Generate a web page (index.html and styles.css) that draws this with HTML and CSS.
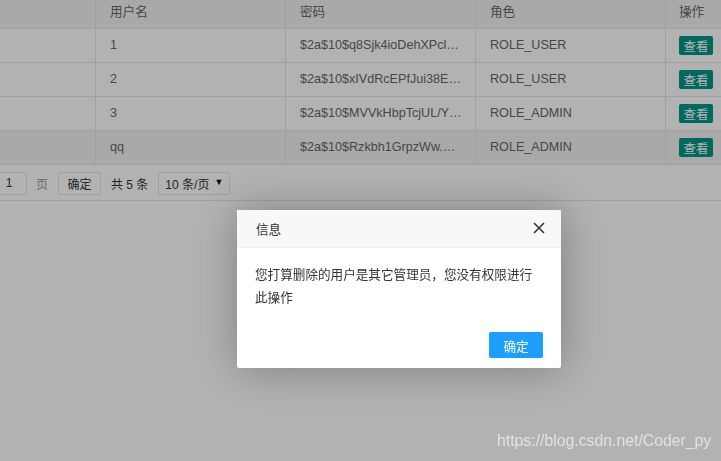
FILE: index.html
```html
<!DOCTYPE html>
<html lang="zh-CN">
<head>
<meta charset="utf-8">
<title>用户管理</title>
<link rel="stylesheet" href="styles.css">
</head>
<body>
<div class="page">
  <div class="table">
    <div class="row head">
      <div class="cell"></div>
      <div class="cell">用户名</div>
      <div class="cell">密码</div>
      <div class="cell">角色</div>
      <div class="cell">操作</div>
    </div>
    <div class="row">
      <div class="cell"></div>
      <div class="cell">1</div>
      <div class="cell">$2a$10$q8Sjk4ioDehXPcl…</div>
      <div class="cell">ROLE_USER</div>
      <div class="cell"><span class="btn-xs">查看</span></div>
    </div>
    <div class="row">
      <div class="cell"></div>
      <div class="cell">2</div>
      <div class="cell">$2a$10$xIVdRcEPfJui38E…</div>
      <div class="cell">ROLE_USER</div>
      <div class="cell"><span class="btn-xs">查看</span></div>
    </div>
    <div class="row">
      <div class="cell"></div>
      <div class="cell">3</div>
      <div class="cell">$2a$10$MVVkHbpTcjUL/Y…</div>
      <div class="cell">ROLE_ADMIN</div>
      <div class="cell"><span class="btn-xs">查看</span></div>
    </div>
    <div class="row hover">
      <div class="cell"></div>
      <div class="cell">qq</div>
      <div class="cell">$2a$10$Rzkbh1GrpzWw.…</div>
      <div class="cell">ROLE_ADMIN</div>
      <div class="cell"><span class="btn-xs">查看</span></div>
    </div>
  </div>
  <div class="pager">
    <span class="skip-input">1</span>
    <span class="muted">页</span>
    <span class="pbtn">确定</span>
    <span class="count">共 5 条</span>
    <span class="limit">10 条/页<span class="arrow">▼</span></span>
  </div>
</div>

<div class="shade"></div>

<div class="dialog">
  <div class="dlg-title">
    <span>信息</span>
    <svg class="close" width="12" height="12" viewBox="0 0 12 12"><path d="M1 1 L11 11 M11 1 L1 11" stroke="#333" stroke-width="1.6" fill="none"/></svg>
  </div>
  <div class="dlg-content">您打算删除的用户是其它管理员，您没有权限进行此操作</div>
  <div class="dlg-btns"><span class="dlg-btn">确定</span></div>
</div>

<div class="watermark">https://blog.csdn.net/Coder_py</div>
</body>
</html>
```

FILE: styles.css
```css
html, body {
  margin: 0;
  padding: 0;
  height: 100%;
  overflow: hidden;
}
body {
  font-family: "Liberation Sans", "Noto Sans CJK SC", sans-serif;
  color: #666;
  background: #fff;
}
.page {
  height: 461px;
  background: #fff;
}
.table {
  display: flex;
  flex-direction: column;
}
.row {
  display: grid;
  grid-template-columns: 96px 190px 190px 190px 1fr;
  height: 34px;
  border-bottom: 1px solid #e6e6e6;
  box-sizing: border-box;
  font-size: 12.6px;
}
.row.head {
  height: 29px;
  background: #f2f2f2;
  padding-bottom: 7px;
}
.row.hover {
  background: #f2f2f2;
}
.cell {
  border-right: 1px solid #e6e6e6;
  padding: 0 14px;
  display: flex;
  align-items: center;
  min-width: 0;
  white-space: nowrap;
  overflow: hidden;
  padding-bottom: 1px;
}
.row.head .cell {
  margin-bottom: -7px;
  padding-bottom: 7px;
}
.cell:last-child {
  border-right: none;
  padding-left: 13px;
}
.btn-xs {
  display: inline-flex;
  align-items: center;
  justify-content: center;
  height: 19px;
  padding: 0 4.5px;
  background: #009688;
  color: #fff;
  font-size: 12.4px;
  border-radius: 2px;
  margin-top: 1px;
}
.pager {
  display: flex;
  align-items: center;
  height: 36px;
  box-sizing: border-box;
  border-bottom: 1px solid #e6e6e6;
  padding-top: 1px;
  margin-left: -9px;
  font-size: 12px;
  color: #333;
}
.skip-input {
  width: 36px;
  height: 23px;
  box-sizing: border-box;
  border: 1px solid #e6e6e6;
  border-radius: 2px;
  display: inline-flex;
  align-items: center;
  justify-content: center;
  color: #333;
}
.muted {
  color: #999;
  margin-left: 9px;
}
.pbtn {
  margin-left: 10px;
  width: 43px;
  height: 23px;
  box-sizing: border-box;
  border: 1px solid #e6e6e6;
  border-radius: 2px;
  display: inline-flex;
  align-items: center;
  justify-content: center;
}
.count {
  margin-left: 10px;
}
.limit {
  margin-left: 10px;
  width: 72px;
  height: 23px;
  box-sizing: border-box;
  border: 1px solid #e6e6e6;
  border-radius: 2px;
  display: inline-flex;
  align-items: center;
  padding-left: 6px;
  position: relative;
}
.arrow {
  position: absolute;
  right: 6px;
  top: 4px;
  font-size: 9px;
  color: #000;
}
.shade {
  position: fixed;
  inset: 0;
  background: rgba(0, 0, 0, 0.3);
}
.dialog {
  position: fixed;
  left: 237px;
  top: 210px;
  width: 324px;
  background: #fff;
  box-shadow: 1px 1px 45px rgba(0, 0, 0, 0.3);
  border-radius: 2px;
}
.dlg-title {
  height: 38px;
  box-sizing: border-box;
  background: #f8f8f8;
  border-bottom: 1px solid #eee;
  display: flex;
  align-items: center;
  justify-content: space-between;
  padding: 0 16px 1px 19px;
  font-size: 12.6px;
  color: #333;
}
.close {
  display: block;
}
.dlg-content {
  padding: 16px 28px 18px 18px;
  font-size: 12.6px;
  line-height: 23px;
  color: #333;
}
.dlg-btns {
  display: flex;
  justify-content: flex-end;
  padding: 4px 18px 10px;
}
.dlg-btn {
  width: 54px;
  height: 26px;
  box-sizing: border-box;
  background: #1e9fff;
  border-radius: 2px;
  color: #fff;
  font-size: 12.6px;
  display: inline-flex;
  align-items: center;
  justify-content: center;
}
.watermark {
  position: fixed;
  left: 497px;
  top: 432px;
  font-family: "Liberation Sans", Arial, sans-serif;
  font-size: 15.8px;
  color: rgba(255, 255, 255, 0.62);
  white-space: nowrap;
}
```
